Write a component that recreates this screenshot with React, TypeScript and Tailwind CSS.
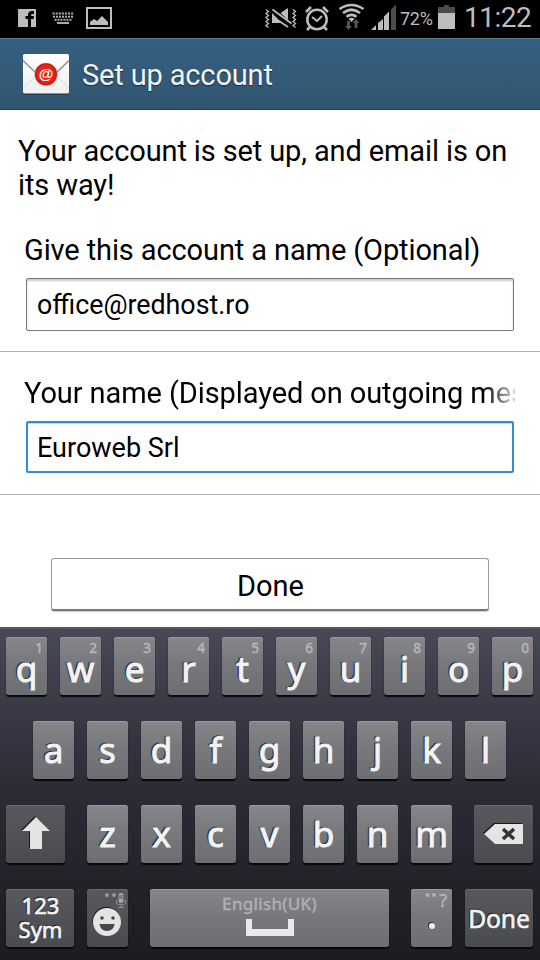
import React from "react";

type KeyProps = {
  children?: React.ReactNode;
  hint?: string;
  className?: string;
  dark?: boolean;
};

function Key({ children, hint, className = "w-[41px]", dark = false }: KeyProps) {
  const tone = dark
    ? "bg-linear-to-b from-[#59595d] to-[#4a4b4f] shadow-[0_2px_1px_#08080a,inset_0_1px_0_#69696d]"
    : "bg-linear-to-b from-[#858689] via-[#77787c] to-[#6d6e71] shadow-[0_2px_1px_#08080a,inset_0_1px_0_#9b9b9f]";
  return (
    <div className={`relative h-[58px] shrink-0 rounded-[3px] text-[#f3f3f3] ${tone} ${className}`}>
      {hint && (
        <span className="absolute right-[4px] top-[3px] text-[13.5px] leading-[16px] text-[#b6b6b8] [-webkit-text-stroke:0.5px_#b6b6b8]">{hint}</span>
      )}
      {children}
    </div>
  );
}

function Letter({ ch, hint }: { ch: string; hint?: string }) {
  return (
    <Key hint={hint}>
      <div
        className={`text-center text-[35px] leading-[58px] [-webkit-text-stroke:1px_#f3f3f3] [text-shadow:-1.5px_-1.5px_1px_#222] ${hint ? "pt-[3px]" : "pt-0"}`}
      >
        {ch}
      </div>
    </Key>
  );
}

function StatusBar() {
  return (
    <div className="flex h-[38px] shrink-0 bg-black font-[Roboto,sans-serif] text-[#bdbdbd]">
      <svg className="ml-[18px]" width="94" height="38" viewBox="18 0 94 38">
        <path fill="#bdbdbd" d="M18 9h18v18H18z" />
        <path fill="#000" d="M28 27v-8h-2.500v-3H28v-1q0-4 4-4h2v3h-1.500q-1.500 0-1.500 1.500v.5h3l-.5 3H31v8z" />
        <g fill="#aaa">
          {[0, 1, 2, 3, 4, 5, 6].map((i) => (
            <g key={i}>
              <rect x={52.5 + i * 3.1} y="12.5" width="2.1" height="2" />
              <rect x={53 + i * 3} y="15.7" width="2" height="2" />
              {i < 6 && <rect x={54.5 + i * 3} y="18.8" width="2" height="2" />}
            </g>
          ))}
          <rect x="57" y="22" width="12" height="2" />
        </g>
        <rect x="87" y="8" width="24" height="20" fill="none" stroke="#bdbdbd" strokeWidth="2" />
        <path fill="#bdbdbd" d="M90 25v-3l4-3 3 2 5-5 3 3 3 3v3z" />
      </svg>
      <svg className="ml-[152px]" width="134" height="38" viewBox="264 0 134 38" fill="none">
        <path stroke="#bdbdbd" strokeWidth="1.3" d="M266 9.500l2.500 2-2.500 2 2.500 2-2.500 2 2.500 2-2.500 2 2.500 2-2.500 2 2.500 2M293 9.500l2.500 2-2.500 2 2.500 2-2.500 2 2.500 2-2.500 2 2.500 2-2.500 2 2.500 2" />
        <path fill="#bdbdbd" d="M272 13v10h10zM280.500 13l7.500-5v12z" />
        <path stroke="#bdbdbd" strokeWidth="1.8" d="M272.500 9.500l19 14M279 21l9 6" />
        <g stroke="#bdbdbd">
          <circle cx="317" cy="19.500" r="9.700" strokeWidth="2.500" />
          <path strokeWidth="2" d="M312 17l5 4 5-5" />
          <path strokeWidth="2.500" d="M310 27l-3 3M324 27l3 3M306 12l5-5M323 7l5 5" />
        </g>
        <g stroke="#bdbdbd" strokeWidth="2.700">
          <path d="M339.500 9q12-8 24 0M343 13q8.500-6.500 17 0M346.500 16.800q5-4 10 0" />
        </g>
        <path fill="#bdbdbd" d="M348.500 18.800q3-2 6 0l-3 3.200z" />
        <path fill="#555" d="M347 21h3v5h2l-3.500 4-3.500-4h2zM354.500 28v-5h-2l3.500-4 3.500 4h-2v5z" />
        <path fill="#bdbdbd" d="M371 30l5-5v5zM378 30v-7l5-4v11zM384 30V16.500l5-5V30z" />
        <path fill="#4c4c4c" d="M391 30V9.500l5-5V30z" />
      </svg>
      <span className="ml-[2px] w-[35px] pt-[1px] text-[18px] leading-[36px] tracking-[-0.3px]">72%</span>
      <svg width="26" height="38" viewBox="435 0 26 38">
        <path fill="#4c4c4c" d="M438 7h6V5h5v2h6v7h-17z" />
        <path fill="#bdbdbd" d="M438 13h17v16h-17z" />
      </svg>
      <span className="ml-[3px] text-[28px] leading-[36px] tracking-[-0.5px]">11:22</span>
    </div>
  );
}

function Header() {
  return (
    <header className="flex h-[72px] shrink-0 items-center border-b border-[#263a4c] border-t border-t-[#587b96] bg-linear-to-b from-[#365f80] to-[#315670] pl-[22px]">
      <svg width="48" height="44" viewBox="0 0 48 44">
        <defs>
          <linearGradient id="paper" x2="0" y2="1">
            <stop stopColor="#fff" />
            <stop offset="1" stopColor="#efefef" />
          </linearGradient>
        </defs>
        <rect x="1" y="3" width="46" height="40" rx="1.500" fill="#213d50" />
        <rect x="1" y="2" width="46" height="39.500" rx="1.500" fill="url(#paper)" />
        <path d="M1 36l14-13M47 36L33 23" stroke="#ddd" />
        <path d="M1 8.500l13 12.500M47 8.500L34 21" fill="none" stroke="#888" strokeWidth="1.200" />
        <circle cx="24" cy="22.500" r="11.700" fill="#c9ada9" />
        <circle cx="24" cy="22.300" r="11" fill="#c21a10" />
        <circle cx="24" cy="22" r="9.700" fill="#ee2010" />
        <text x="24" y="26.500" textAnchor="middle" fontFamily="Liberation Sans" fontSize="15" fontWeight="bold" fill="#fff">@</text>
      </svg>
      <h1 className="ml-[12px] pt-[2px] text-[29px] leading-[40px] tracking-[-0.15px] text-[#f4f4f4] [text-shadow:0_1px_1px_#152b3a]">Set up account</h1>
    </header>
  );
}

export default function App() {
  return (
    <div className="flex h-[960px] w-[540px] flex-col overflow-hidden bg-white font-[Roboto,sans-serif] text-black antialiased">
      <StatusBar />
      <Header />
      <main className="flex h-[517px] shrink-0 flex-col">
        <p className="ml-[18px] mt-[24px] whitespace-nowrap text-[29px] leading-[34px] tracking-[-0.12px]">
          Your account is set up, and email is on<br />its way!
        </p>
        <label className="ml-[24px] mt-[31px] h-[34px] whitespace-nowrap text-[29px] leading-[34px] tracking-[-0.11px]">
          Give this account a name (Optional)
        </label>
        <div className="ml-[26px] mt-[11px] h-[53px] w-[488px] rounded-[2px] border border-[#777] pl-[10px] text-[26.8px] leading-[53px] shadow-[inset_0_2px_2px_#ccc]">
          office@redhost.ro
        </div>
        <div className="mt-[20px] h-px bg-[#b3b3b3]" />
        <label className="ml-[24px] mt-[24px] h-[34px] w-[491px] overflow-hidden whitespace-nowrap text-[29px] leading-[34px] tracking-[-0.09px] [mask-image:linear-gradient(to_right,black_460px,transparent_496px)]">
          Your name (Displayed on outgoing messages)
        </label>
        <div className="ml-[26px] mt-[11px] h-[52px] w-[488px] rounded-[2px] border-2 border-[#328bd3] pl-[9px] text-[27px] leading-[50px] shadow-[inset_0_1px_1px_#ccc]">
          Euroweb Srl
        </div>
        <div className="mt-[21px] h-px bg-[#b3b3b3]" />
        <button className="ml-[51px] mt-[63px] h-[53px] w-[438px] rounded-[3px] border border-[#999] border-b-2 border-b-[#777] pl-px pt-[5px] text-[29px] leading-[45px] shadow-[0_1px_1px_#ccc]">
          Done
        </button>
      </main>
      <section className="flex h-[333px] shrink-0 flex-col gap-[26px] border-t-2 border-[#56575e] bg-linear-to-b from-[#484856] via-[#2a2b35] to-[#1c1d1f] pt-[8px] font-['Noto_Sans',sans-serif]">
        <div className="flex gap-[13px] pl-[6px]">
          {"qwertyuiop".split("").map((c, i) => (
            <Letter key={c} ch={c} hint={String((i + 1) % 10)} />
          ))}
        </div>
        <div className="flex gap-[13px] pl-[33px]">
          {"asdfghjkl".split("").map((c) => <Letter key={c} ch={c} />)}
        </div>
        <div className="flex pl-[6px]">
          <Key dark className="mr-[22px] w-[59px]">
            <svg width="59" height="58" viewBox="0 0 59 58">
              <path d="M29 11L15 25h8v18h12V25h8z" fill="#18181b" />
              <path d="M30 12L16 26h8v18h12V26h8z" fill="#e4e4e4" />
            </svg>
          </Key>
          <div className="flex gap-[13px]">
            {"zxcvbnm".split("").map((c) => <Letter key={c} ch={c} />)}
          </div>
          <Key dark className="ml-[22px] w-[59px]">
            <svg width="59" height="58" viewBox="0 0 59 58">
              <path d="M9 28l11-10h28v20H20z" fill="#19191c" />
              <path d="M10 29l11-10h27q1 0 1 1v18q0 1-1 1H21z" fill="#e4e4e4" />
              <path d="M29 24l11 10M40 24L29 34" stroke="#333437" strokeWidth="3.500" />
            </svg>
          </Key>
        </div>
        <div className="flex pl-[6px]">
          <Key dark className="w-[68px]">
            <div className="pl-px pt-[4px] text-center text-[22px] leading-[24px] [-webkit-text-stroke:0.7px_#f3f3f3] [text-shadow:-1px_-1px_1px_#111]">
              123<br />Sym
            </div>
          </Key>
          <Key dark className="ml-[13px] w-[41px]">
            <svg width="41" height="58" viewBox="0 0 41 58" fill="none">
              <circle cx="19.500" cy="32" r="14" fill="#18181b" />
              <circle cx="20" cy="33" r="14" fill="#e4e4e4" />
              <circle cx="15" cy="29" r="1.800" fill="#46474a" />
              <circle cx="26" cy="29" r="1.800" fill="#46474a" />
              <path d="M12.500 35h15q-1 7-7.500 7t-7.500-7z" fill="#46474a" />
              <circle cx="20" cy="6" r="2" fill="#96969a" />
              <circle cx="27" cy="6" r="2" fill="#96969a" />
              <rect x="31.500" y="4" width="5" height="10" rx="2" fill="#a6a6a8" />
              <path d="M32 7h4M32 9h4" stroke="#555" />
              <path d="M29.500 11v2q0 3 4.500 3t4.500-3v-2M34 16v2M31 18.500h6" stroke="#929295" />
            </svg>
          </Key>
          <Key className="ml-[22px] w-[239px]">
            <div className="pt-[5px] text-center text-[17px] leading-[20px] tracking-[0.35px] text-[#b1b1b3] [-webkit-text-stroke:0.4px_#b1b1b3]">English(UK)</div>
            <svg className="mx-auto mt-[5px] block" width="48" height="17" viewBox="0 0 48 17">
              <path d="M0 0h6v10h36V0h6v17H0z" fill="#e9e9e9" />
            </svg>
          </Key>
          <Key className="ml-[22px] w-[41px]">
            <svg width="41" height="58" viewBox="0 0 41 58">
              <circle cx="16.500" cy="6" r="2" fill="#b2b2b5" />
              <circle cx="23" cy="6" r="2" fill="#b2b2b5" />
              <circle cx="20.300" cy="36.400" r="3.300" fill="#303033" />
              <circle cx="21" cy="37" r="3" fill="#f3f3f3" />
            </svg>
            <span className="absolute right-[5px] top-0 text-[18px] leading-[22px] text-[#b2b2b5] [-webkit-text-stroke:0.5px_#b2b2b5]">?</span>
          </Key>
          <Key dark className="ml-[13px] w-[68px]">
            <div className="text-center text-[24.5px] leading-[59px] [-webkit-text-stroke:0.7px_#f3f3f3] [text-shadow:-1px_-1px_1px_#111]">Done</div>
          </Key>
        </div>
      </section>
    </div>
  );
}
